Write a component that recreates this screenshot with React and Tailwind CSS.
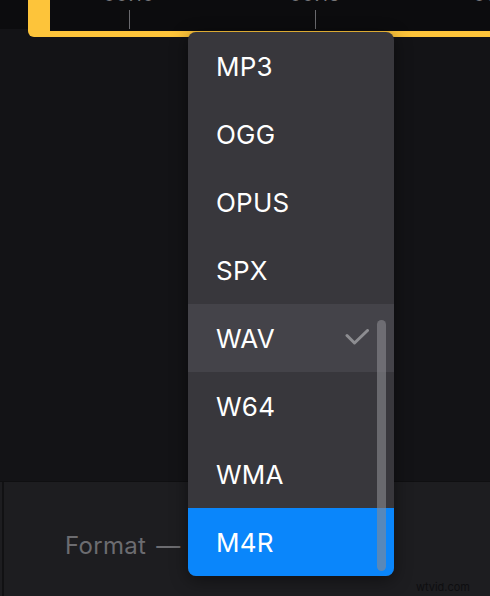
import React from 'react';

const formats = ['MP3', 'OGG', 'OPUS', 'SPX', 'WAV', 'W64', 'WMA', 'M4R'];
const ticks = ['00:10', '00:15', '00:20'];

const Timeline = () => {
  return (
    <div className="flex h-[37px]">
      {/* left gutter */}
      <div className="w-[28px] shrink-0 h-[29px] bg-[#0c0c0e]"></div>

      {/* yellow trim frame */}
      <div className="flex-1 min-w-0 bg-[#fdc43a] rounded-bl-[6px] pl-[22px] pb-[6px]">
        <div className="h-full bg-[#0c0c0e] overflow-hidden flex pl-[49px] gap-[126px]">
          {ticks.map((t) => (
            <div key={t} className="w-[60px] shrink-0 flex flex-col items-center">
              <span className="text-[19px] leading-[20px] -mt-[15px] text-[#77777b] tracking-wide">{t}</span>
              <div className="mt-[5px] w-px h-[19px] bg-[#6a6a6e]"></div>
            </div>
          ))}
        </div>
      </div>
    </div>
  );
};

const FormatMenu = () => {
  return (
    <div className="absolute left-[188px] top-[32px] w-[206px] rounded-[8px] overflow-hidden bg-[#38373c] shadow-[0_4px_18px_rgba(0,0,0,0.45)]">
      {formats.map((f) => {
        const selected = f === 'WAV';
        const active = f === 'M4R';
        return (
          <div
            key={f}
            className={
              'h-[68px] flex items-center justify-between pl-[28px] pr-[25px] ' +
              (active ? 'bg-[#0a86fb]' : selected ? 'bg-[#444349]' : '')
            }
          >
            <span className="text-[26px] text-white tracking-[0.2px]">{f}</span>
            {selected && (
              <svg width="24" height="18" viewBox="0 0 24 18" fill="none">
                <path
                  d="M2 6.5L9.5 14L22.5 1.5"
                  stroke="#8d8d91"
                  strokeWidth="3"
                  strokeLinecap="round"
                  strokeLinejoin="round"
                />
              </svg>
            )}
          </div>
        );
      })}

      {/* scrollbar */}
      <div className="absolute right-[8px] top-[288px] bottom-[5px] w-[9px] rounded-full bg-[#8a8a90]/60"></div>
    </div>
  );
};

const App = () => {
  return (
    <div
      className="relative w-full h-[596px] overflow-hidden bg-[#131316] flex flex-col"
      style={{ fontFamily: 'Inter, "Noto Sans", sans-serif' }}
    >
      <Timeline />

      <div className="flex-1"></div>

      {/* bottom panel */}
      <div className="h-[115px] border-t border-[#0f0f11] bg-[#1d1d20] flex">
        <div className="w-[2px]"></div>
        <div className="w-[2px] bg-[#111113]"></div>
        <div className="flex-1 pl-[61px] pt-[46px] relative">
          <span className="text-[24px] text-[#6c6c70] tracking-[0.3px] [word-spacing:3px]">Format —</span>
          <span className="absolute right-[20px] bottom-[1px] text-[11px] text-[#0e0e10]">wtvid.com</span>
        </div>
      </div>

      <FormatMenu />
    </div>
  );
};

export default App;
